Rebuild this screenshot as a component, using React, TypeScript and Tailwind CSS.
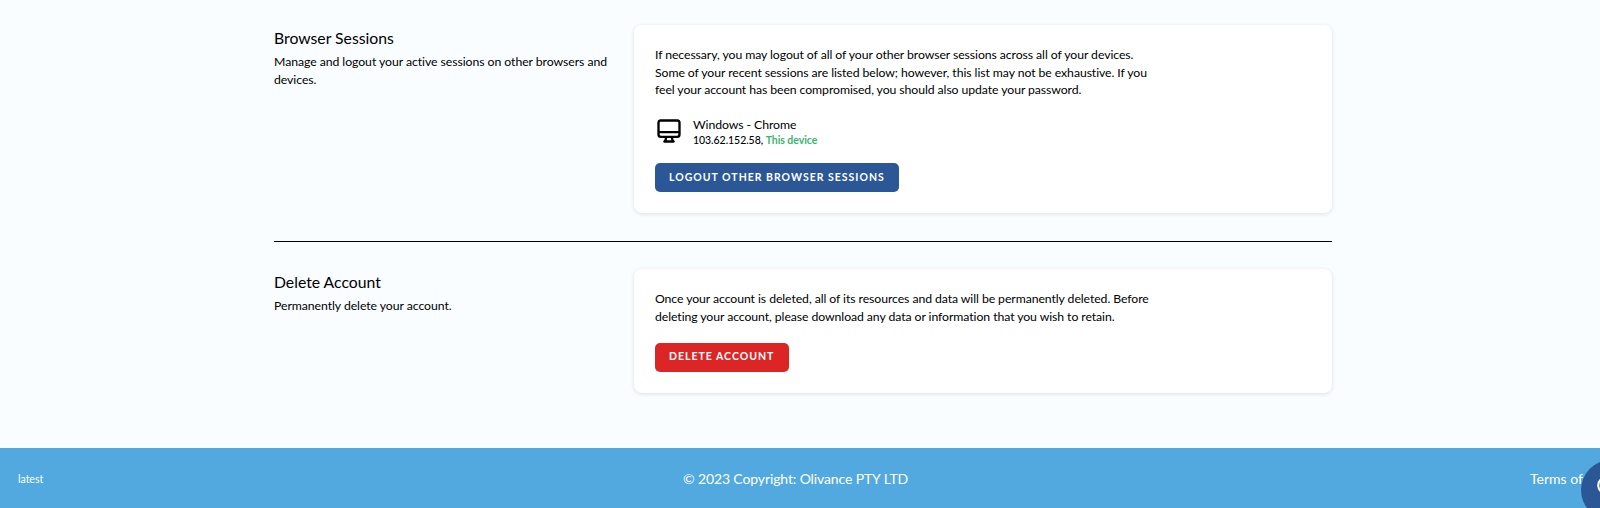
function Monitor() {
    return (
        <svg viewBox="0 0 24 24" className="w-[28px] h-[28px] shrink-0" fill="none" stroke="black" strokeWidth="2" strokeLinecap="round" strokeLinejoin="round">
            <path d="M9.75 17L9 20l-1 1h8l-1-1-.75-3M3 13h18M5 17h14a2 2 0 002-2V5a2 2 0 00-2-2H5a2 2 0 00-2 2v10a2 2 0 002 2z" />
        </svg>
    )
}

function ChatIcon() {
    return (
        <svg viewBox="0 0 24 24" className="w-[26px] h-[26px]" fill="none" stroke="white" strokeWidth="2" strokeLinecap="round" strokeLinejoin="round">
            <path d="M12 2.5c-5 0-9 3.6-9 8 0 2.4 1.2 4.5 3 6v4.5l4-2.6c.6.1 1.3.1 2 .1 5 0 9-3.6 9-8s-4-8-9-8z" />
        </svg>
    )
}

function SectionTitle({ title, text }: { title: string; text: string }) {
    return (
        <div className="w-[340px]">
            <h3 className="pt-[1px] text-[15.75px] leading-[24.5px] text-black">{title}</h3>
            <p className="mt-[2.5px] text-[12.25px] leading-[17.5px] tracking-[-0.06px] text-black">{text}</p>
        </div>
    )
}

export default function App() {
    return (
        <div className="relative h-[508px] overflow-hidden bg-[#f9fdff] font-['Lato','Liberation_Sans',sans-serif]">
            <main className="ml-[274px] w-[1058px] pt-[25px]">
                <section className="flex justify-between">
                    <SectionTitle title="Browser Sessions" text="Manage and logout your active sessions on other browsers and devices." />
                    <div className="w-[698px] rounded-lg bg-white p-[21px] shadow-[0_1px_4px_rgba(0,0,0,0.12)]">
                        <p className="max-w-[504px] text-[12.25px] leading-[17.5px] tracking-[-0.08px] text-black">
                            If necessary, you may logout of all of your other browser sessions across all of your devices. Some of your recent sessions are listed below; however, this list may not be exhaustive. If you feel your account has been compromised, you should also update your password.
                        </p>
                        <div className="mt-[17px] flex items-center gap-[10px]">
                            <Monitor />
                            <div>
                                <div className="text-[12.25px] leading-[17.5px] tracking-[-0.08px] text-black">Windows - Chrome</div>
                                <div className="text-[10.5px] leading-[14px] font-medium tracking-[-0.05px] text-black">
                                    103.62.152.58, <span className="font-bold text-[#3cb371]">This device</span>
                                </div>
                            </div>
                        </div>
                        <button className="mt-[16px] block h-[29px] rounded-[5px] bg-[#2b5797] px-[14px] text-[10.5px] font-bold tracking-[1px] text-white uppercase">
                            Logout other browser sessions
                        </button>
                    </div>
                </section>
                <div className="mt-[28px] h-px bg-black" />
                <section className="mt-[27px] flex justify-between">
                    <SectionTitle title="Delete Account" text="Permanently delete your account." />
                    <div className="w-[698px] rounded-lg bg-white p-[21px] shadow-[0_1px_4px_rgba(0,0,0,0.12)]">
                        <p className="max-w-[504px] text-[12.25px] leading-[17.5px] tracking-[-0.08px] text-black">
                            Once your account is deleted, all of its resources and data will be permanently deleted. Before deleting your account, please download any data or information that you wish to retain.
                        </p>
                        <button className="mt-[17.5px] block h-[29px] rounded-[5px] bg-[#dc2626] pl-[14px] pr-[15px] text-[10.5px] font-bold tracking-[1px] text-white uppercase">
                            Delete account
                        </button>
                    </div>
                </section>
            </main>
            <footer className="mt-[55.5px] flex h-[60px] items-center justify-between bg-[#52a9df] pl-[18px] text-white">
                <span className="w-[273px] pt-[4px] text-[10.5px]">latest</span>
                <span className="text-[14px] tracking-[-0.12px]">© 2023 Copyright: Olivance PTY LTD</span>
                <span className="w-[300px] pl-[230px] text-[14px] whitespace-nowrap">Terms of</span>
            </footer>
            <div className="absolute left-[1581px] top-[460px] h-[60px] w-[60px] rounded-full bg-[#2b5797] p-[14px]">
                <ChatIcon />
            </div>
        </div>
    )
}
